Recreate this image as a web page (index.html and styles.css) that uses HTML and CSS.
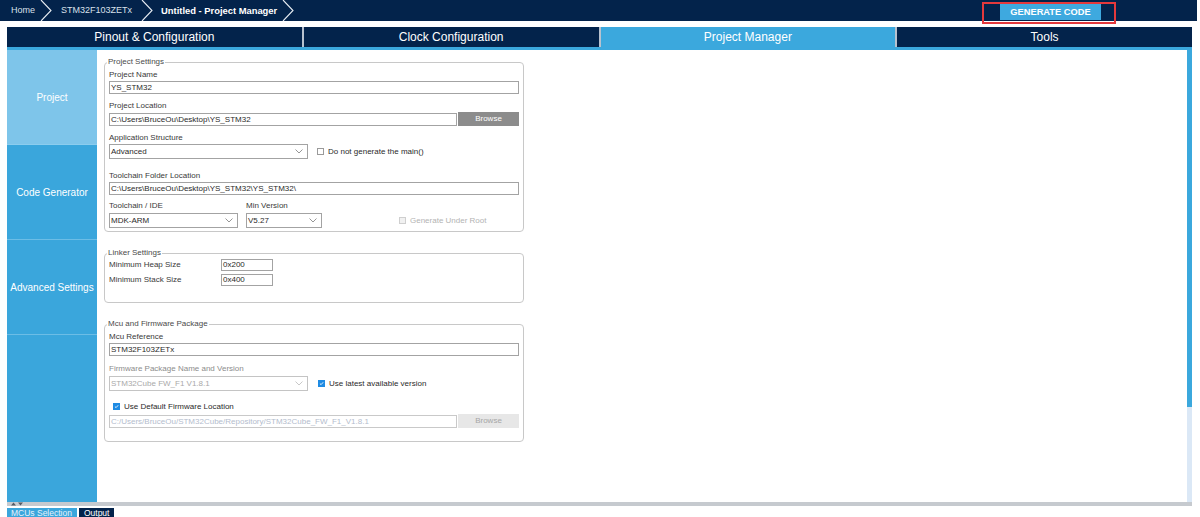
FILE: index.html
```html
<!DOCTYPE html>
<html lang="en">
<head>
<meta charset="utf-8">
<title>Untitled - Project Manager</title>
<link rel="stylesheet" href="styles.css">
</head>
<body>
<div class="app">
  <header class="topbar">
    <nav class="crumbs">
      <span class="crumb first">Home</span>
      <svg class="chev" width="12" height="21" viewBox="0 0 12 21"><polyline points="1,0 11,10.5 1,21" /></svg>
      <span class="crumb">STM32F103ZETx</span>
      <svg class="chev" width="12" height="21" viewBox="0 0 12 21"><polyline points="1,0 11,10.5 1,21" /></svg>
      <span class="crumb current">Untitled - Project Manager</span>
      <svg class="chev" width="12" height="21" viewBox="0 0 12 21"><polyline points="1,0 11,10.5 1,21" /></svg>
    </nav>
    <button class="generate">GENERATE CODE</button>
  </header>
  <div class="highlight"></div>

  <div class="tabs">
    <div class="tab">Pinout &amp; Configuration</div>
    <div class="tab">Clock Configuration</div>
    <div class="tab active">Project Manager</div>
    <div class="tab">Tools</div>
  </div>
  <div class="tabline"></div>

  <div class="workspace">
    <aside class="sidenav">
      <div class="navitem selected">Project</div>
      <div class="navitem">Code Generator</div>
      <div class="navitem">Advanced Settings</div>
      <div class="navfill"></div>
    </aside>

    <main class="content">
      <fieldset class="group project">
        <legend>Project Settings</legend>
        <label class="lbl first">Project Name</label>
        <div class="input full">YS_STM32</div>

        <label class="lbl">Project Location</label>
        <div class="row">
          <div class="input grow">C:\Users\BruceOu\Desktop\YS_STM32</div>
          <button class="browse">Browse</button>
        </div>

        <label class="lbl">Application Structure</label>
        <div class="row">
          <div class="select wide"><span>Advanced</span><svg class="dd" width="8" height="5" viewBox="0 0 8 5"><polyline points="0.5,0.5 4,4 7.5,0.5"/></svg></div>
          <span class="check"><span class="box"></span>Do not generate the main()</span>
        </div>

        <label class="lbl gap12">Toolchain Folder Location</label>
        <div class="input full">C:\Users\BruceOu\Desktop\YS_STM32\YS_STM32\</div>

        <div class="toolgrid">
          <label class="lbl">Toolchain / IDE</label>
          <label class="lbl">Min Version</label>
          <span></span>
          <div class="select"><span>MDK-ARM</span><svg class="dd" width="8" height="5" viewBox="0 0 8 5"><polyline points="0.5,0.5 4,4 7.5,0.5"/></svg></div>
          <div class="select"><span>V5.27</span><svg class="dd" width="8" height="5" viewBox="0 0 8 5"><polyline points="0.5,0.5 4,4 7.5,0.5"/></svg></div>
          <span class="check disabled root"><span class="box"></span>Generate Under Root</span>
        </div>
      </fieldset>

      <fieldset class="group linker">
        <legend>Linker Settings</legend>
        <div class="linkgrid">
          <span class="lbl">Minimum Heap Size</span>
          <div class="input small">0x200</div>
          <span class="lbl">Minimum Stack Size</span>
          <div class="input small">0x400</div>
        </div>
      </fieldset>

      <fieldset class="group mcu">
        <legend>Mcu and Firmware Package</legend>
        <label class="lbl first">Mcu Reference</label>
        <div class="input full">STM32F103ZETx</div>

        <label class="lbl muted fw">Firmware Package Name and Version</label>
        <div class="row fwrow">
          <div class="select wide disabled"><span>STM32Cube FW_F1 V1.8.1</span><svg class="dd" width="8" height="5" viewBox="0 0 8 5"><polyline points="0.5,0.5 4,4 7.5,0.5"/></svg></div>
          <span class="check checked"><span class="box"><svg width="7" height="7" viewBox="0 0 7 7"><polyline points="1.3,3.6 2.9,5.1 5.8,1.8"/></svg></span>Use latest available version</span>
        </div>

        <span class="check checked deflt"><span class="box"><svg width="7" height="7" viewBox="0 0 7 7"><polyline points="1.3,3.6 2.9,5.1 5.8,1.8"/></svg></span>Use Default Firmware Location</span>
        <div class="row pathrow">
          <div class="input grow disabled">C:/Users/BruceOu/STM32Cube/Repository/STM32Cube_FW_F1_V1.8.1</div>
          <button class="browse disabled">Browse</button>
        </div>
      </fieldset>
    </main>

    <div class="scrollbar"><div class="thumb"></div></div>
  </div>

  <div class="splitter">
    <svg width="14" height="4" viewBox="0 0 14 4"><polygon points="1,3.5 3.5,0.5 6,3.5"/><polygon points="8,0.5 13,0.5 10.5,3.5"/></svg>
  </div>
  <div class="bottomtabs">
    <div class="btab light">MCUs Selection</div>
    <div class="btab dark">Output</div>
  </div>
</div>
</body>
</html>
```

FILE: styles.css
```css
* { box-sizing: border-box; }

html, body {
  margin: 0;
  padding: 0;
  background: #ffffff;
}

body {
  font-family: "Liberation Sans", Arial, sans-serif;
  width: 1200px;
  height: 517px;
  overflow: hidden;
  color: #333;
}

.app {
  position: relative;
  width: 1200px;
  height: 517px;
}

/* ---------- top bar ---------- */
.topbar {
  height: 21px;
  width: 1197px;
  background: #03234b;
  display: flex;
  align-items: stretch;
  justify-content: space-between;
}

.crumbs {
  display: flex;
  align-items: center;
  padding-left: 11px;
}

.crumb {
  font-size: 9px;
  color: #d9e0ea;
  line-height: 21px;
  white-space: nowrap;
}

.crumb.current {
  color: #ffffff;
  font-weight: bold;
  font-size: 9.4px;
}

.chev {
  display: block;
  fill: none;
  stroke: #e8edf3;
  stroke-width: 1.1;
  margin: 0 9px 0 5px;
}

.chev:nth-of-type(2) { margin-left: 9px; margin-right: 8px; }
.chev:nth-of-type(3) { margin-left: 5px; }

.generate {
  margin: 4px 96px 1px 0;
  width: 101px;
  height: 16px;
  border: none;
  padding: 0;
  background: #3ea9df;
  color: #ffffff;
  font-family: "Liberation Sans", Arial, sans-serif;
  font-weight: bold;
  font-size: 9.3px;
  line-height: 16px;
}

.highlight {
  position: absolute;
  left: 982px;
  top: 2px;
  width: 134px;
  height: 22px;
  border: 2px solid #e4393c;
  pointer-events: none;
}

/* ---------- main tabs ---------- */
.tabs {
  margin: 6px 8px 0 7px;
  height: 20px;
  display: grid;
  grid-template-columns: repeat(4, 1fr);
  gap: 2px;
  background: #b8c2cf;
}

.tab {
  background: #03234b;
  color: #ffffff;
  font-size: 12px;
  line-height: 20px;
  text-align: center;
  white-space: nowrap;
}

.tab.active {
  background: #3ba8dd;
}

.tabline {
  margin: 0 8px 0 7px;
  height: 3px;
  background: #3ba8dd;
}

/* ---------- workspace ---------- */
.workspace {
  margin: 0 8px 0 7px;
  height: 452px;
  display: flex;
}

.sidenav {
  width: 90px;
  display: flex;
  flex-direction: column;
  background: #3aa6dc;
}

.navitem {
  height: 95px;
  flex: none;
  display: flex;
  align-items: center;
  justify-content: center;
  color: #ffffff;
  font-size: 10px;
  background: #3aa6dc;
  border-bottom: 1px solid #6cbde6;
  white-space: nowrap;
}

.navitem.selected {
  background: #7ec5ea;
  border-bottom-color: #8ccdee;
}

.navfill { flex: 1; }

.content {
  flex: 1;
  background: #ffffff;
  padding: 7px 0 0 7px;
  display: flex;
  flex-direction: column;
  align-items: flex-start;
}

.scrollbar {
  width: 5px;
  background: #dbe8f6;
}

.thumb {
  height: 357px;
  background: #3ba8dd;
}

/* ---------- groups ---------- */
.group {
  width: 420px;
  margin: 0;
  border: 1px solid #c8c8c8;
  border-radius: 4px;
  padding: 0 4px 0 4px;
  display: flex;
  flex-direction: column;
  min-width: 0;
}

.group legend {
  font-size: 8px;
  line-height: 10px;
  color: #4a4a4a;
  padding: 0 1px;
  margin-left: -2px;
}

.group.project { padding-bottom: 3px; }
.group.linker { margin-top: 16px; padding-bottom: 16px; }
.group.mcu { margin-top: 16px; padding-bottom: 13px; }

.lbl {
  display: block;
  font-size: 8px;
  line-height: 10px;
  height: 10px;
  color: #3a3a3a;
  white-space: nowrap;
  margin-top: 7px;
  margin-bottom: 1px;
}

.lbl.first { margin-top: 3px; }
.lbl.gap12 { margin-top: 12px; }
.lbl.muted { color: #8c8c8c; }
.lbl.fw { margin-top: 8px; margin-bottom: 2px; }

.input {
  height: 13px;
  border: 1px solid #a3a3a3;
  background: #fff;
  font-size: 8px;
  line-height: 11px;
  padding-left: 1px;
  color: #2a2a2a;
  white-space: nowrap;
  overflow: hidden;
}

.input.full { width: 410px; }
.input.grow { flex: 1; }
.input.small { width: 52px; height: 12px; line-height: 10px; }
.input.disabled {
  color: #b3bccd;
  border-color: #c9c9c9;
}

.row {
  display: flex;
  align-items: center;
}

.browse {
  width: 61px;
  height: 14px;
  margin-left: 1px;
  border: none;
  padding: 0;
  background: #8c8c8c;
  color: #ffffff;
  font-family: "Liberation Sans", Arial, sans-serif;
  font-size: 8px;
  line-height: 14px;
}

.browse.disabled {
  background: #e7e7e7;
  color: #a6a6a6;
}

.select {
  height: 15px;
  border: 1px solid #a3a3a3;
  background: #fff;
  display: flex;
  align-items: center;
  justify-content: space-between;
  padding: 0 4px 0 1px;
  font-size: 8px;
  color: #2a2a2a;
  white-space: nowrap;
}

.select.wide { width: 199px; }
.select.disabled { color: #a9a9a9; border-color: #c4c4c4; }

.dd {
  fill: none;
  stroke: #8a8a8a;
  stroke-width: 0.9;
}

.select.disabled .dd { stroke: #c2c2c2; }

.check {
  display: flex;
  align-items: center;
  font-size: 8px;
  color: #2a2a2a;
  white-space: nowrap;
  margin-left: 9px;
}

.check .box {
  width: 7px;
  height: 7px;
  border: 1px solid #9a9a9a;
  background: #fff;
  margin-right: 4px;
  display: flex;
  align-items: center;
  justify-content: center;
  flex: none;
}

.check.checked .box {
  background: #1f8be3;
  border-color: #1f8be3;
}

.check.checked .box svg {
  fill: none;
  stroke: #ffffff;
  stroke-width: 1.2;
}

.check.disabled { color: #b3b3b3; }
.check.disabled .box { border-color: #cfcfcf; background: #f1f1f1; }

.toolgrid {
  display: grid;
  grid-template-columns: 129px 76px auto;
  column-gap: 8px;
  align-items: center;
}

.toolgrid .lbl { margin-top: 6px; margin-bottom: 2px; }

.check.root { margin-left: 69px; }

.fwrow .check { margin-left: 10px; }

.check.deflt {
  margin: 10px 0 0 4px;
  height: 10px;
}

.pathrow { margin-top: 3px; }

.linkgrid {
  display: grid;
  grid-template-columns: 112px 52px;
  row-gap: 3px;
  align-items: center;
  padding-top: 1px;
}

.linkgrid .lbl { margin: 0; }

/* ---------- bottom ---------- */
.splitter {
  margin: 0 8px 0 7px;
  height: 4px;
  background: #c6cacf;
  display: flex;
  align-items: center;
  padding-left: 3px;
}

.splitter svg { fill: #555c66; display: block; }

.bottomtabs {
  margin: 2px 0 0 7px;
  display: flex;
  gap: 2px;
}

.btab {
  height: 9px;
  font-size: 8.5px;
  line-height: 10px;
  white-space: nowrap;
  overflow: visible;
}

.btab.light {
  background: #3aa6dc;
  color: #e6f1fa;
  padding: 0 5px 0 4px;
}

.btab.dark {
  background: #03234b;
  color: #ffffff;
  padding: 0 5px;
}
```
